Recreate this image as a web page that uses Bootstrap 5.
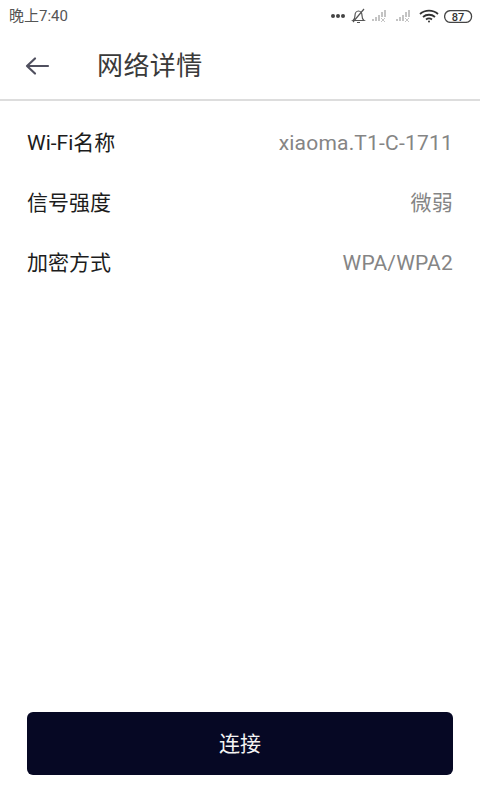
<!DOCTYPE html>
<html lang="zh">
<head>
<meta charset="utf-8">
<title>网络详情</title>
<link rel="stylesheet" href="https://cdn.jsdelivr.net/npm/bootstrap@5.3.0/dist/css/bootstrap.min.css">
<style>
html,body{height:100%;}
body{font-family:Roboto,"Noto Sans CJK SC",sans-serif;background:#fff;color:#222;}
.screen{height:800px;width:480px;overflow:hidden;}
.statusline{height:32px;padding:0 7px 0 9px;font-size:15px;color:#555;}
.statusicons{gap:5px;}
.topbar{height:69px;padding-left:25px;border-bottom:2px solid #ddd;}
.topbar h1{font-size:26px;font-weight:400;color:#3a3a3a;margin:0 0 0 47px;line-height:1;letter-spacing:.4px;}
.backbtn{width:25px;height:20px;display:block;}
.infolist{padding:12px 27px 0;}
.inforow{height:60px;font-size:21px;font-weight:400;color:#1c1c1c;}
.inforow span{padding-top:2px;}
.inforow .val{color:#858585;letter-spacing:.2px;}
.footerbar{padding:0 27px 25px;}
.connectbtn{height:63px;background:#060824;border-radius:6px;color:#f4f4f4;font-size:21px;font-weight:400;border:0;padding-top:8px;}
.connectbtn:hover{background:#060824;color:#f4f4f4;}
</style>
</head>
<body>
<div class="screen d-flex flex-column">
  <div class="statusline d-flex justify-content-between align-items-center">
    <span>晚上7:40</span>
    <div class="statusicons d-flex align-items-center">
      <svg width="16" height="6" viewBox="0 0 16 6"><circle cx="3" cy="3" r="2" fill="#444"/><circle cx="8" cy="3" r="2" fill="#444"/><circle cx="13" cy="3" r="2" fill="#444"/></svg>
      <svg width="15" height="16" viewBox="0 0 15 16" fill="none" stroke="#555" stroke-width="1.200"><path d="M2 12.500h11c-1.500-1-2-2.500-2-5 0-2.500-1.500-4.500-3.500-4.500S4 5 4 7.500c0 2.500-.5 4-2 5z"/><path d="M6 14.500h3M2 14L13 1"/></svg>
      <svg width="19" height="14" viewBox="0 0 19 14" fill="#c4c4c4"><rect x="1" y="10" width="2" height="2"/><rect x="4" y="8" width="2" height="4"/><rect x="7" y="6" width="2" height="6"/><rect x="10" y="3" width="2" height="5"/><rect x="13" y="1" width="2" height="7"/><path d="M10 9l4 4M14 9l-4 4" stroke="#c4c4c4" fill="none"/></svg>
      <svg width="19" height="14" viewBox="0 0 19 14" fill="#c4c4c4"><rect x="1" y="10" width="2" height="2"/><rect x="4" y="8" width="2" height="4"/><rect x="7" y="6" width="2" height="6"/><rect x="10" y="3" width="2" height="5"/><rect x="13" y="1" width="2" height="7"/><path d="M10 9l4 4M14 9l-4 4" stroke="#c4c4c4" fill="none"/></svg>
      <svg width="20" height="14" viewBox="0 0 20 14" fill="none" stroke="#333" stroke-width="1.800"><path d="M1 5c5-4.500 13-4.500 18 0M4 8c3.500-3 8.500-3 12 0M7 10.500c2-1.500 4-1.500 6 0"/><circle cx="10" cy="12.500" r="1" fill="#333" stroke="none"/></svg>
      <svg width="29" height="13" viewBox="0 0 29 13"><rect x=".6" y=".6" width="27" height="11.800" rx="5.900" fill="none" stroke="#444" stroke-width="1.300"/><text x="14" y="10.500" text-anchor="middle" font-family="Roboto" font-weight="500" font-size="11" fill="#333">87</text></svg>
    </div>
  </div>
  <div class="topbar d-flex align-items-center">
    <svg class="backbtn" viewBox="0 0 25 20" fill="none" stroke="#50505f" stroke-width="2.200" stroke-linecap="round" stroke-linejoin="round"><path d="M2 10h21M10 2.500L2 10l8 7.500"/></svg>
    <h1>网络详情</h1>
  </div>
  <div class="infolist flex-grow-1">
    <div class="inforow d-flex justify-content-between align-items-center"><span>Wi-Fi名称</span><span class="val">xiaoma.T1-C-1711</span></div>
    <div class="inforow d-flex justify-content-between align-items-center"><span>信号强度</span><span class="val">微弱</span></div>
    <div class="inforow d-flex justify-content-between align-items-center"><span>加密方式</span><span class="val">WPA/WPA2</span></div>
  </div>
  <div class="footerbar">
    <button type="button" class="btn connectbtn w-100">连接</button>
  </div>
</div>
<script src="https://cdn.jsdelivr.net/npm/bootstrap@5.3.0/dist/js/bootstrap.bundle.min.js"></script>
</body>
</html>
